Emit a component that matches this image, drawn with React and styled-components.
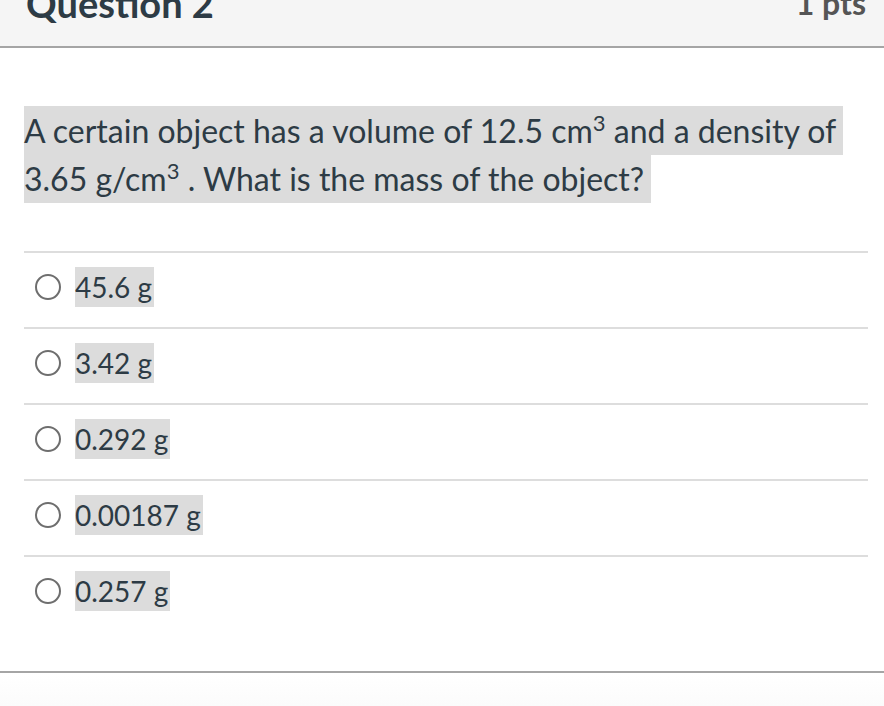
import React from 'react';
import styled, { createGlobalStyle } from 'styled-components';

const Global = createGlobalStyle`
  html, body {
    margin: 0;
    padding: 0;
    background: #ffffff;
  }
  body {
    font-family: Lato, "Open Sans", sans-serif;
    color: #2d3b45;
  }
`;

const Page = styled.div`
  width: 884px;
  height: 706px;
  overflow: hidden;
  display: flex;
  flex-direction: column;
`;

const Header = styled.div`
  height: 46px;
  flex-shrink: 0;
  background: #f5f5f5;
  border-bottom: 2px solid #a5a5a5;
  display: flex;
  justify-content: space-between;
  align-items: flex-start;
  padding: 0 18px 0 26px;
  overflow: hidden;
`;

const Title = styled.div`
  font-size: 38px;
  font-weight: 700;
  line-height: 38px;
  margin-top: -16px;
  color: #2d3b45;
`;

const Points = styled.div`
  font-size: 32px;
  font-weight: 700;
  line-height: 38px;
  margin-top: -16px;
  color: #555555;
`;

const Body = styled.div`
  flex: 1;
  padding: 0 16px 0 24px;
`;

const Prompt = styled.p`
  margin: 59px 0 0;
  font-size: 32px;
  line-height: 48px;
  width: 830px;
`;

const Mark = styled.span`
  background: #dcdcdc;
  padding: ${(p) => p.$pad}px 7px ${(p) => p.$pad}px 0;
  box-decoration-break: clone;
  -webkit-box-decoration-break: clone;
  sup {
    font-size: 22px;
    line-height: 0;
  }
`;

const Answers = styled.div`
  margin-top: 48px;
`;

const Answer = styled.div`
  height: 76px;
  box-sizing: border-box;
  border-top: 2px solid #dddddd;
  display: flex;
  align-items: center;
  gap: 14px;
  padding: 0 0 6px 11px;
`;

const Radio = styled.span`
  width: 22px;
  height: 22px;
  border: 2px solid #6e6e6e;
  border-radius: 50%;
  flex-shrink: 0;
  background: #ffffff;
`;

const Label = styled.span`
  font-size: 28px;
  line-height: 40px;
  background: #dcdcdc;
  padding-right: 2px;
`;

const Footer = styled.div`
  height: 33px;
  flex-shrink: 0;
  border-top: 2px solid #a5a5a5;
  background: linear-gradient(#ffffff, #fbfbfb);
`;

const choices = ['45.6 g', '3.42 g', '0.292 g', '0.00187 g', '0.257 g'];

export default function App() {
  return (
    <Page>
      <Global />
      <Header>
        <Title>Question 2</Title>
        <Points>1 pts</Points>
      </Header>
      <Body>
        <Prompt>
          <Mark $pad={5}>
            A certain object has a volume of 12.5 cm<sup>3</sup> and a density of 3.65 g/cm
            <sup>3</sup> . What is the mass of the object?
          </Mark>
        </Prompt>
        <Answers>
          {choices.map((c) => (
            <Answer key={c}>
              <Radio />
              <Label>{c}</Label>
            </Answer>
          ))}
        </Answers>
      </Body>
      <Footer />
    </Page>
  );
}
